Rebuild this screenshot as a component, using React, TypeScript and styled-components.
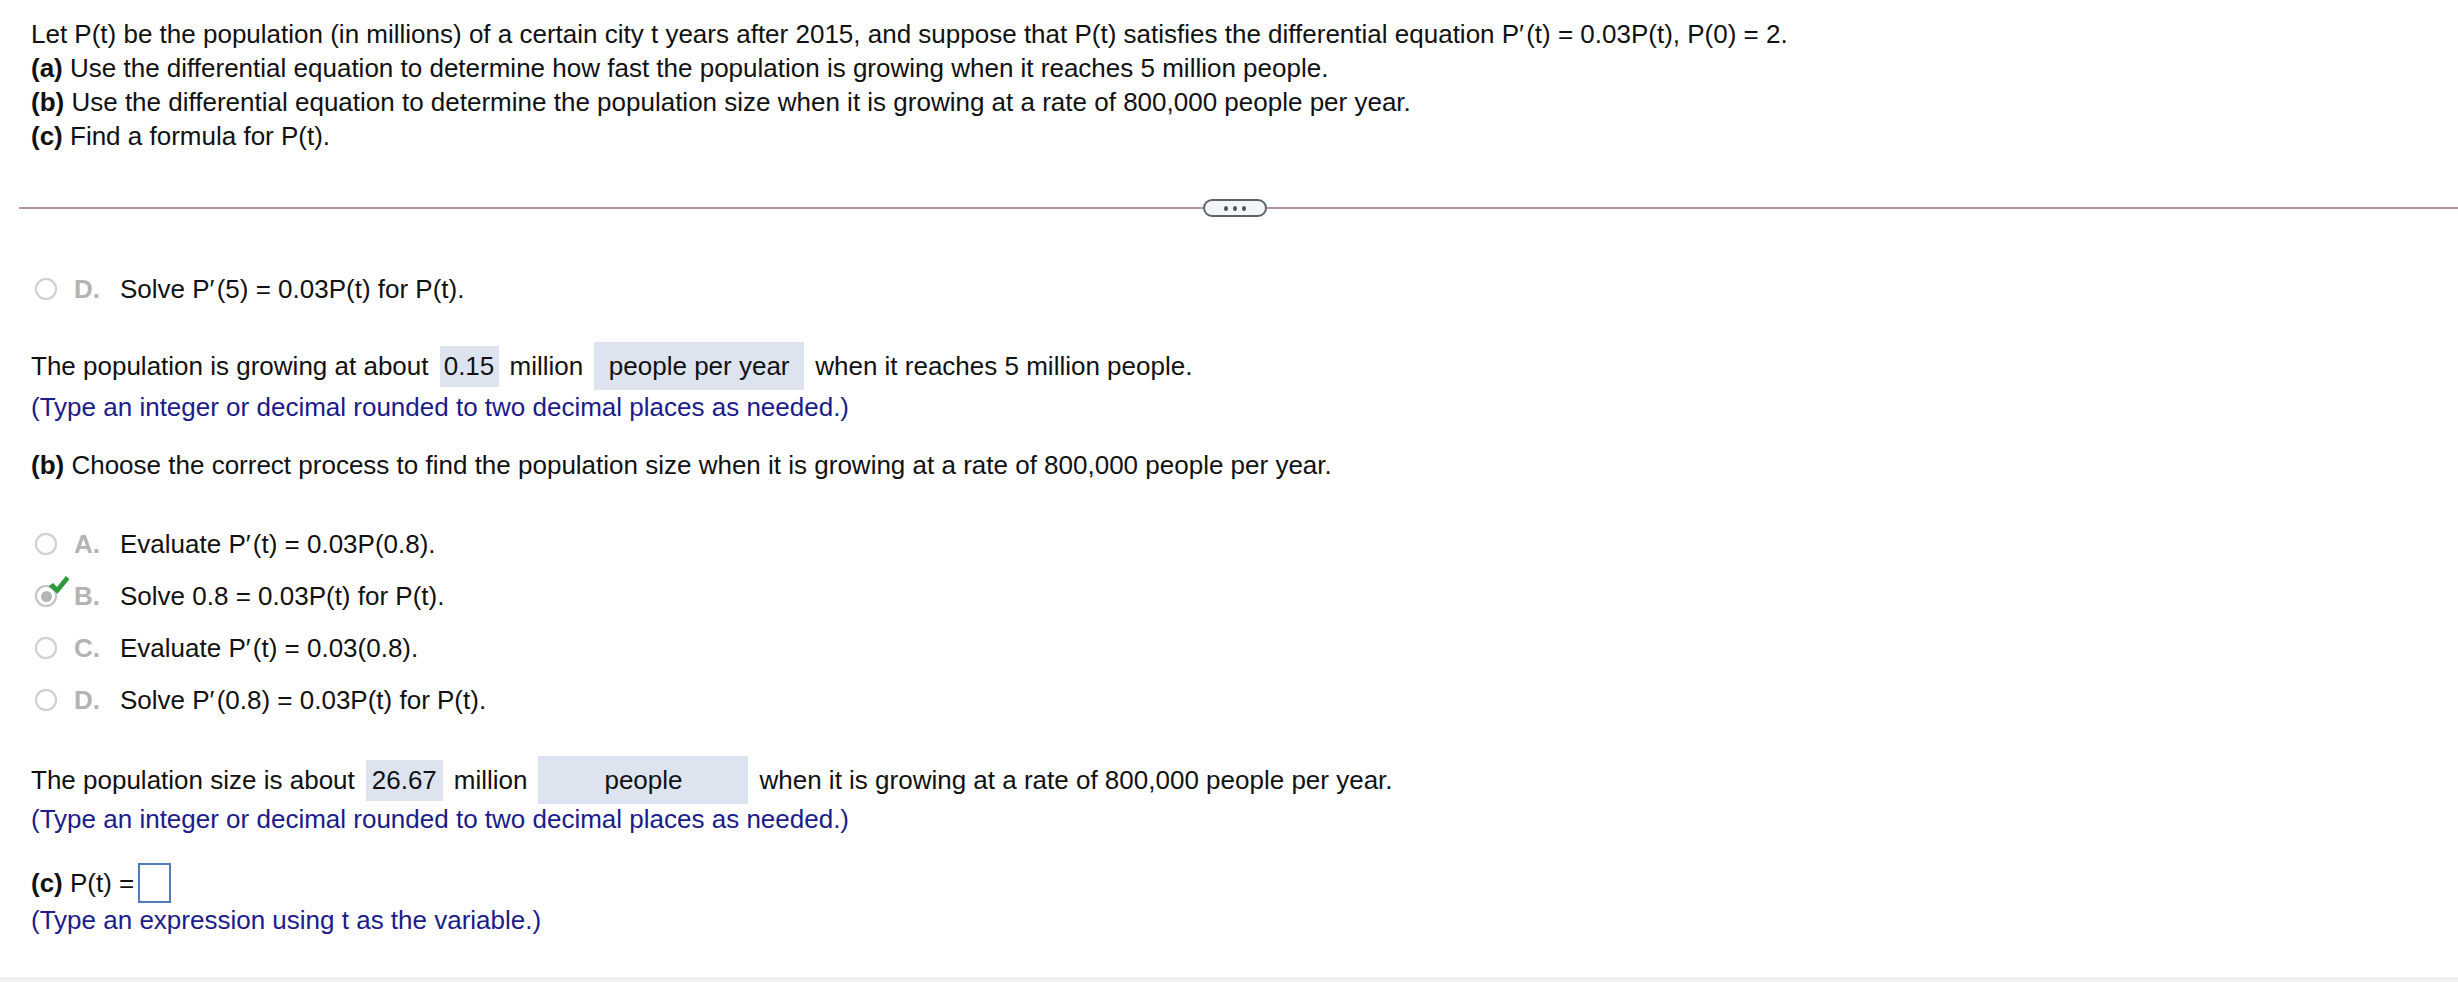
import React from "react";
import styled, { createGlobalStyle } from "styled-components";

const GlobalStyle = createGlobalStyle`
  html, body {
    margin: 0;
    padding: 0;
    background: #f0f0f0;
  }
  body {
    font-family: "Liberation Sans", Arial, sans-serif;
    font-size: 26px;
    color: #111;
  }
`;

const Page = styled.div`
  width: 2458px;
  height: 982px;
  overflow: hidden;
  background: #f0f0f0;
`;

const Main = styled.main`
  height: 977px;
  background: #fff;
  display: flex;
  flex-direction: column;
`;

const Header = styled.section`
  padding: 17px 31px 0;
  display: flex;
  flex-direction: column;
`;

const Line = styled.div<{ $mt?: number }>`
  line-height: 34px;
  white-space: pre;
  margin-top: ${(p) => p.$mt ?? 0}px;
`;

const Hint = styled(Line)`
  color: #1b1b8a;
`;

const Divider = styled.div`
  margin: 46px 0 0 19px;
  display: flex;
  align-items: center;
  height: 18px;
`;

const Rule = styled.div<{ $w?: number }>`
  flex: ${(p) => (p.$w ? "none" : "1")};
  width: ${(p) => (p.$w ? `${p.$w}px` : "auto")};
  height: 2px;
  background: #b8929f;
`;

const MoreButton = styled.button`
  width: 64px;
  height: 18px;
  box-sizing: border-box;
  border: 2px solid #5b6570;
  border-radius: 9px;
  background: #f3f5f8;
  display: flex;
  align-items: center;
  justify-content: center;
  gap: 5px;
  padding: 0;
  flex: none;
`;

const Dot = styled.span`
  width: 4px;
  height: 5px;
  border-radius: 50%;
  background: #4a525c;
`;

const Body = styled.section`
  padding: 0 0 0 31px;
  display: flex;
  flex-direction: column;
`;

const OptionList = styled.div<{ $mt: number }>`
  display: flex;
  flex-direction: column;
  gap: 18px;
  margin-top: ${(p) => p.$mt}px;
`;

const OptionRow = styled.div`
  display: flex;
  align-items: center;
  height: 34px;
  margin-left: 4px;
`;

const RadioWrap = styled.span`
  position: relative;
  width: 22px;
  height: 22px;
  flex: none;
`;

const Radio = styled.span<{ $checked?: boolean }>`
  display: flex;
  align-items: center;
  justify-content: center;
  box-sizing: border-box;
  width: 22px;
  height: 22px;
  border-radius: 50%;
  border: 2px solid ${(p) => (p.$checked ? "#c4c4c4" : "#d0d0d0")};
  background: #fff;
  box-shadow: 0 0 1px rgba(0, 0, 0, 0.15);
  &::after {
    content: "";
    display: ${(p) => (p.$checked ? "block" : "none")};
    width: 11px;
    height: 11px;
    border-radius: 50%;
    background: #b5b5b5;
  }
`;

const Check = styled.svg`
  position: absolute;
  left: 12px;
  top: -10px;
  width: 23px;
  height: 21px;
`;

const Letter = styled.span`
  font-weight: bold;
  color: #b3b3b3;
  width: 46px;
  margin-left: 17px;
  flex: none;
`;

const OptionText = styled.span`
  white-space: pre;
`;

const Sentence = styled.div<{ $mt: number }>`
  display: flex;
  align-items: center;
  gap: 11px;
  height: 48px;
  margin-top: ${(p) => p.$mt}px;
  white-space: pre;
`;

const NumBox = styled.span<{ $w: number }>`
  display: flex;
  align-items: center;
  justify-content: center;
  width: ${(p) => p.$w}px;
  height: 41px;
  background: #dde4ef;
`;

const DropBox = styled.span`
  display: flex;
  align-items: center;
  justify-content: center;
  width: 210px;
  height: 48px;
  background: #dde4ef;
`;

const FormulaRow = styled.div`
  display: flex;
  align-items: center;
  height: 40px;
  margin-top: 27px;
  white-space: pre;
`;

const InputBox = styled.span`
  display: inline-block;
  box-sizing: border-box;
  width: 33px;
  height: 40px;
  border: 2px solid #4f7bbd;
  margin-left: 4px;
  background: #fff;
`;

const B = styled.b`
  font-weight: bold;
`;

type Opt = { letter: string; text: string; checked?: boolean };

const Option: React.FC<Opt> = ({ letter, text, checked }) => (
  <OptionRow>
    <RadioWrap>
      <Radio $checked={checked} />
      {checked && (
        <Check viewBox="0 0 22 20">
          <path
            d="M1.5 10.5 L6 7.5 L9.5 11.5 L18 1 L21.5 4 L10 18 Z"
            fill="#2f9a3a"
          />
        </Check>
      )}
    </RadioWrap>
    <Letter>{letter}.</Letter>
    <OptionText>{text}</OptionText>
  </OptionRow>
);

const PR = "P\u2032\u200a";

export default function App() {
  const optionsB: Opt[] = [
    { letter: "A", text: `Evaluate ${PR}(t) = 0.03P(0.8).` },
    { letter: "B", text: `Solve 0.8 = 0.03P(t) for P(t).`, checked: true },
    { letter: "C", text: `Evaluate ${PR}(t) = 0.03(0.8).` },
    { letter: "D", text: `Solve ${PR}(0.8) = 0.03P(t) for P(t).` },
  ];
  return (
    <Page>
      <GlobalStyle />
      <Main>
        <Header>
          <Line>
            Let P(t) be the population (in millions) of a certain city t years after 2015, and suppose that P(t) satisfies the differential equation {PR}(t) = 0.03P(t), P(0) = 2.
          </Line>
          <Line>
            <B>(a)</B> Use the differential equation to determine how fast the population is growing when it reaches 5 million people.
          </Line>
          <Line>
            <B>(b)</B> Use the differential equation to determine the population size when it is growing at a rate of 800,000 people per year.
          </Line>
          <Line>
            <B>(c)</B> Find a formula for P(t).
          </Line>
        </Header>

        <Divider>
          <Rule $w={1184} />
          <MoreButton aria-label="more">
            <Dot />
            <Dot />
            <Dot />
          </MoreButton>
          <Rule />
        </Divider>

        <Body>
          <OptionList $mt={55}>
            <Option letter="D" text={`Solve ${PR}(5) = 0.03P(t) for P(t).`} />
          </OptionList>

          <Sentence $mt={36}>
            <span>The population is growing at about</span>
            <NumBox $w={59}>0.15</NumBox>
            <span>million</span>
            <DropBox>people per year</DropBox>
            <span>when it reaches 5 million people.</span>
          </Sentence>
          <Hint>(Type an integer or decimal rounded to two decimal places as needed.)</Hint>

          <Line $mt={24}>
            <B>(b)</B> Choose the correct process to find the population size when it is growing at a rate of 800,000 people per year.
          </Line>

          <OptionList $mt={45}>
            {optionsB.map((o) => (
              <Option key={o.letter} {...o} />
            ))}
          </OptionList>

          <Sentence $mt={39}>
            <span>The population size is about</span>
            <NumBox $w={77}>26.67</NumBox>
            <span>million</span>
            <DropBox>people</DropBox>
            <span>when it is growing at a rate of 800,000 people per year.</span>
          </Sentence>
          <Hint $mt={-2}>(Type an integer or decimal rounded to two decimal places as needed.)</Hint>

          <FormulaRow>
            <B>(c)</B> P(t) =
            <InputBox />
          </FormulaRow>
          <Hint>(Type an expression using t as the variable.)</Hint>
        </Body>
      </Main>
    </Page>
  );
}
